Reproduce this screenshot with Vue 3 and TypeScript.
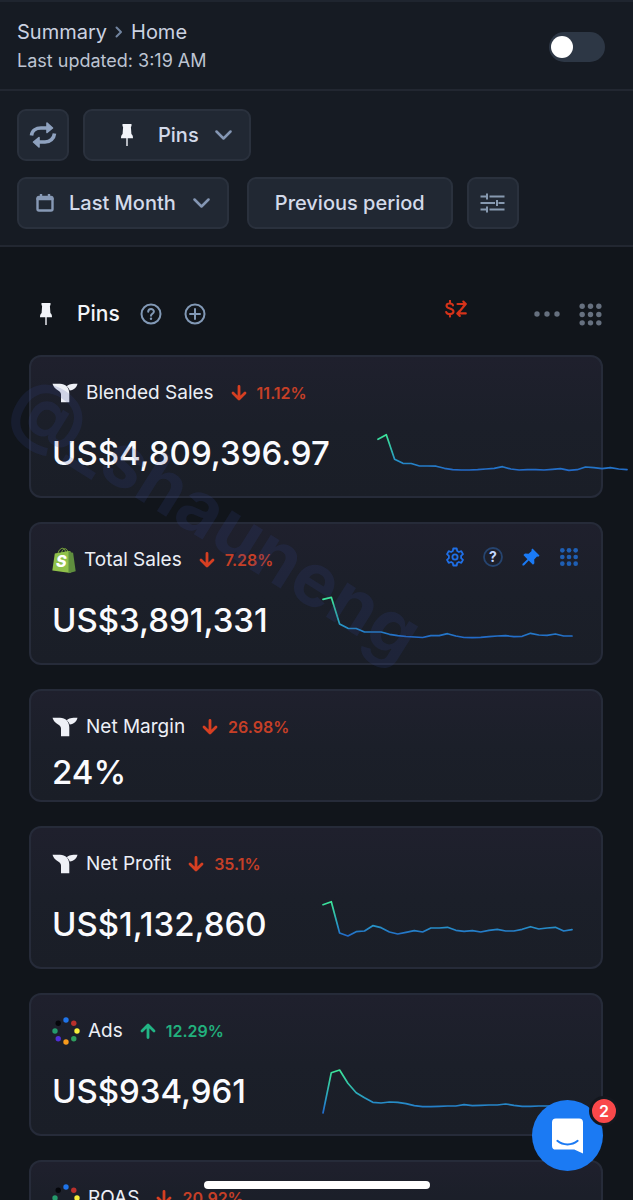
<script setup lang="ts">
import { ref } from 'vue'

type IconName = 'whale' | 'shop' | 'ring'

interface Metric {
  title: string
  icon: IconName
  change: string
  up?: boolean
  value?: string
  tools?: boolean
  series?: number[]
}

const CHART_WIDTH = 249

const metrics: Metric[] = [
  {
    title: 'Blended Sales',
    icon: 'whale',
    change: '11.12%',
    value: 'US$4,809,396.97',
    series: [21.3, 16.7, 41.3, 45.3, 45.5, 48, 48, 48.2, 50.3, 51.7, 52, 52, 51.7, 51, 50.3, 48.7, 51, 52, 51.7, 51.7, 52, 51.3, 50.7, 52.3, 51.7, 49, 49.7, 50.7, 49.7, 51, 51.7],
  },
  {
    title: 'Total Sales',
    icon: 'shop',
    change: '7.28%',
    value: 'US$3,891,331',
    tools: true,
    series: [14.3, 12.3, 39, 43.3, 43.5, 47, 47, 47, 49.3, 50.7, 51.5, 52, 52.5, 50.7, 50.7, 48.7, 51, 52.5, 52.7, 52.3, 51.7, 51, 50.7, 51.7, 51.3, 48.3, 50, 50.3, 49, 51, 51],
  },
  { title: 'Net Margin', icon: 'whale', change: '26.98%', value: '24%' },
  {
    title: 'Net Profit',
    icon: 'whale',
    change: '35.1%',
    value: 'US$1,132,860',
    series: [15.7, 12.7, 44, 47, 42.7, 42, 36.7, 38.7, 43, 45, 43.3, 41.7, 43, 39, 39, 38.3, 41.3, 42.3, 41.7, 43, 41.3, 40.3, 42, 42, 40.3, 37.7, 40, 39, 38.3, 42, 40.7],
  },
  {
    title: 'Ads',
    icon: 'ring',
    change: '12.29%',
    up: true,
    value: 'US$934,961',
    series: [57, 16.7, 14, 27.3, 36.7, 41.7, 46.3, 47, 46, 46.3, 47.7, 49.7, 50.7, 50.7, 50.3, 50, 50, 48.7, 49.7, 49.3, 49, 49, 48, 49.3, 50.3, 50.3, 50, 50, 50, 50, 50],
  },
  { title: 'ROAS', icon: 'ring', change: '20.92%' },
]

const ringDots = ['#1f74ea', '#b9302c', '#f7ee3a', '#2f9e5f', '#f79a1c', '#4f2fd6', '#259a6c', '#05060a'].map(
  (fill, i) => {
    const angle = (i * Math.PI) / 4
    return { fill, x: 14 + 11 * Math.sin(angle), y: 14 - 11 * Math.cos(angle) }
  },
)

const gridDots = [4, 12, 20].flatMap((y) => [4, 12, 20].map((x) => ({ x, y })))

const shiftMode = ref(false)

function points(series: number[]): string {
  const step = CHART_WIDTH / (series.length - 1)
  return series.map((y, i) => `${(i * step).toFixed(1)},${y}`).join(' ')
}
</script>

<template>
  <div class="page">
    <header class="top">
      <div>
        <nav class="crumbs" aria-label="Breadcrumb">
          <a href="#summary">Summary</a>
          <svg class="crumb-sep" viewBox="0 0 8 12" aria-hidden="true"><path d="M1.500 1.500 6 6l-4.500 4.500" /></svg>
          <a href="#home">Home</a>
        </nav>
        <p class="updated">Last updated: 3:19 AM</p>
      </div>
      <input v-model="shiftMode" class="switch" type="checkbox" role="switch" aria-label="Live mode" />
    </header>

    <div class="toolbar">
      <div class="row">
        <button class="btn square" type="button" aria-label="Refresh">
          <svg class="refresh" viewBox="0 0 28 28" aria-hidden="true">
            <path class="arc" d="M2.500 14.500C3 9.500 7 7 12 7h9M25.500 12.500c-.5 5-4.500 8.500-9.500 8.500H8" />
            <path class="head" d="m18 2 5.500 5-5.500 4.500zM10 16.500 4.500 21l5.500 5z" />
          </svg>
        </button>
        <button class="btn pins" type="button">
          <svg class="pin" viewBox="0 0 12 22" aria-hidden="true"><path d="M1.500 0h9v2l-.6 1 .5 7c1 .8 1.600 2 1.600 4.200H6.700V22H5.300v-7.800H0C0 12 .6 10.800 1.600 10l.5-7-.6-1z" /></svg>
          <span>Pins</span>
          <svg class="chev" viewBox="0 0 17 10" aria-hidden="true"><path d="m1.500 1.500 7 7 7-7" /></svg>
        </button>
      </div>
      <div class="row">
        <button class="btn month" type="button">
          <svg class="cal" viewBox="0 0 18 18" aria-hidden="true">
            <rect x="1.500" y="3" width="15" height="13.500" rx="1.500" />
            <path d="M1.500 5h15M5 .5V4M13 .5V4" />
          </svg>
          <span>Last Month</span>
          <svg class="chev" viewBox="0 0 17 10" aria-hidden="true"><path d="m1.500 1.500 7 7 7-7" /></svg>
        </button>
        <button class="btn period" type="button">Previous period</button>
        <button class="btn square" type="button" aria-label="Filters">
          <svg class="sliders" viewBox="0 0 25 20" aria-hidden="true">
            <path d="M.5 3.500H6M9.500 3.500h15M7 .5v6M.5 10H15M18.500 10h6M17 7v6M.5 16.500H6M9.500 16.500h15M7 13.500v6" />
          </svg>
        </button>
      </div>
    </div>

    <main class="content">
      <div class="section-head">
        <svg class="pin" viewBox="0 0 12 22" aria-hidden="true"><path d="M1.500 0h9v2l-.6 1 .5 7c1 .8 1.600 2 1.600 4.200H6.700V22H5.300v-7.800H0C0 12 .6 10.800 1.600 10l.5-7-.6-1z" /></svg>
        <h1>Pins</h1>
        <button class="bare help" type="button" aria-label="Help">
          <svg viewBox="0 0 22 22" aria-hidden="true">
            <circle cx="11" cy="11" r="9.500" />
            <path d="M8.200 8.800c0-3.700 5.700-3.600 5.700-.2 0 2.200-2.900 2.200-2.900 4.200" />
            <circle class="dot" cx="11" cy="15.700" r="1.200" />
          </svg>
        </button>
        <button class="bare add" type="button" aria-label="Add metric">
          <svg viewBox="0 0 22 22" aria-hidden="true">
            <circle cx="11" cy="11" r="9.500" />
            <path d="M11 6v10M6 11h10" />
          </svg>
        </button>
        <button class="bare currency" type="button" aria-label="Convert currency">
          <svg viewBox="0 0 22 18" aria-hidden="true">
            <path d="M8 5.400C7.500 2.800 1.500 2.700 1.500 5.700c0 3.300 7 2.300 7 5.900 0 3.300-6.600 3.200-7.300.4M5 .8v2M5 14.600v2" />
            <path d="M12.500 4H20M18.300 1.500 20.800 4 13 13.200M18.300 6.500 20.800 4M20.800 13.400h-8M14.800 10.800l-2.500 2.600 2.500 2.600" />
          </svg>
        </button>
        <button class="bare more" type="button" aria-label="More options">
          <svg viewBox="0 0 26 6" aria-hidden="true">
            <circle cx="3" cy="3" r="2.700" /><circle cx="13" cy="3" r="2.700" /><circle cx="23" cy="3" r="2.700" />
          </svg>
        </button>
        <button class="bare layout" type="button" aria-label="Change layout">
          <svg viewBox="0 0 24 24" aria-hidden="true">
            <circle v-for="(d, i) in gridDots" :key="i" :cx="d.x" :cy="d.y" r="2.600" />
          </svg>
        </button>
      </div>

      <section class="cards" aria-label="Pinned metrics">
        <article v-for="(m, index) in metrics" :key="m.title" class="card">
          <div class="card-head">
            <svg v-if="m.icon === 'whale'" class="whale" viewBox="0 0 26 20" aria-hidden="true">
              <path d="M.5.800H8c5.500 0 9.300 3.700 9.300 9.700v8.700H9V11.500c0-2.500-1.800-3.300-4-4.800C2.800 5.200 1.300 3.500.5.800z" />
              <path d="M25.500.800c-.8 3.700-3.200 6.200-7.800 6.700-.6-1.700-1.500-3.200-2.900-4.300C16.800 1.200 19.500.800 25.500.800z" />
            </svg>
            <svg v-else-if="m.icon === 'shop'" class="shop" viewBox="0 0 24 27" aria-hidden="true">
              <path class="handle" d="M6 6.500C6.500 2.500 10 .5 11.500 1.500 13 2.500 13.500 4 13.500 6M9.500 6c.5-3 2.500-5 4.500-4 1.400.7 1.800 2.500 1.800 4" />
              <path class="bag" d="M2.800 6.500 16.500 4l2 .2V26L.3 23.500z" />
              <path class="side" d="M16.500 4l3 1.500 1.600.3 2.600 18.500-7.200 2z" />
              <text x="4" y="20">S</text>
            </svg>
            <svg v-else class="ring" viewBox="0 0 28 28" aria-hidden="true">
              <circle v-for="(d, i) in ringDots" :key="i" :cx="d.x" :cy="d.y" r="2.700" :fill="d.fill" />
            </svg>
            <h2>{{ m.title }}</h2>
            <span class="change" :class="{ up: m.up }">
              <svg viewBox="0 0 16 16" aria-hidden="true"><path d="M8 1.500v12M2 8l6 6 6-6" /></svg>
              {{ m.change }}
            </span>
            <div v-if="m.tools" class="tools">
              <button class="bare tool" type="button" aria-label="Settings">
                <svg class="gear" viewBox="0 0 20 20" aria-hidden="true">
                  <path d="M8.300 1.500h3.400l.5 2.500 1.700 1 2.400-.8L18 7.100l-1.900 1.700v2.400l1.900 1.700-1.700 2.900-2.400-.8-1.700 1-.5 2.500H8.300L7.800 16l-1.700-1-2.400.8L2 12.900l1.900-1.700V8.800L2 7.100l1.700-2.900 2.400.8 1.700-1z" />
                  <circle cx="10" cy="10" r="2.600" />
                </svg>
              </button>
              <button class="bare tool" type="button" aria-label="About this metric">
                <svg class="about" viewBox="0 0 20 20" aria-hidden="true">
                  <circle cx="10" cy="10" r="9" />
                  <text x="10" y="15" text-anchor="middle">?</text>
                </svg>
              </button>
              <button class="bare tool" type="button" aria-label="Unpin">
                <svg class="tack" viewBox="0 0 20 20" aria-hidden="true">
                  <path d="M11.500 1.500 18.500 8.500l-1.200 1.300-1.300-.2-2.800 3 .2 3.600-1.400 1.600-4.300-4.300L3 18.500 1.500 18.600 1.400 17l5-4.800-4-4.200L4 6.600l3.600.2 3-2.800-.2-1.300z" />
                </svg>
              </button>
              <button class="bare tool" type="button" aria-label="Move card">
                <svg class="mini-grid" viewBox="0 0 24 24" aria-hidden="true">
                  <circle v-for="(d, i) in gridDots" :key="i" :cx="d.x" :cy="d.y" r="2.800" />
                </svg>
              </button>
            </div>
          </div>
          <div class="card-body">
            <strong v-if="m.value" class="value">{{ m.value }}</strong>
            <svg v-if="m.series" class="chart" :viewBox="`0 0 ${CHART_WIDTH} 70`" role="img" :aria-label="`${m.title} trend`">
              <defs>
                <linearGradient :id="`trend-${index}`" x1="0" y1="0" x2="0" y2="1">
                  <stop offset="0" stop-color="#3ce59a" />
                  <stop offset="0.350" stop-color="#33c3a8" />
                  <stop offset="0.700" stop-color="#2795c8" />
                  <stop offset="1" stop-color="#2269c8" />
                </linearGradient>
              </defs>
              <polyline :points="points(m.series)" :stroke="`url(#trend-${index})`" />
            </svg>
          </div>
        </article>
      </section>
    </main>

    <div class="watermark" aria-hidden="true">@_shauneng</div>

    <button class="chat" type="button" aria-label="Open chat, 2 unread">
      <svg viewBox="0 0 32 36" aria-hidden="true">
        <path class="bubble" d="M4 0h24a4 4 0 0 1 4 4v32c-3-1.200-6-2.300-9-4H4a4 4 0 0 1-4-4V4a4 4 0 0 1 4-4z" />
        <path class="smile" d="M5.500 23c6 5 15 5 21 0" />
      </svg>
      <span class="badge">2</span>
    </button>
    <div class="home-bar"></div>
  </div>
</template>

<style>
body {
  margin: 0;
  background: #11151b;
}
</style>

<style scoped>
.page {
  position: relative;
  box-sizing: border-box;
  height: 100vh;
  display: flex;
  flex-direction: column;
  overflow: hidden;
  background: #11151b;
  color: #d3d9e6;
  font-family: Inter, "Liberation Sans", sans-serif;
}

svg {
  display: block;
  flex: none;
  fill: none;
  stroke-linecap: round;
  stroke-linejoin: round;
}

button {
  font: inherit;
  color: inherit;
  cursor: pointer;
}

h1,
h2,
p {
  margin: 0;
}

.top {
  flex: none;
  display: flex;
  align-items: center;
  justify-content: space-between;
  padding: 18px 28px 16px 17px;
  border-top: 2px solid #1f252f;
  border-bottom: 2px solid #222731;
  background: #161b23;
}

.crumbs {
  display: flex;
  align-items: center;
  gap: 8px;
  font-size: 20px;
  line-height: 24px;
}

.crumbs a {
  color: #cbd2e1;
  text-decoration: none;
}

.crumb-sep {
  width: 8px;
  height: 12px;
  stroke: #71849f;
  stroke-width: 2;
}

.updated {
  margin-top: 5px;
  font-size: 18px;
  line-height: 24px;
  color: #bdc4d2;
}

.switch {
  appearance: none;
  flex: none;
  display: flex;
  align-items: center;
  width: 56px;
  height: 30px;
  margin: 0;
  padding: 0 2px;
  border-radius: 15px;
  background: #2d3745;
  cursor: pointer;
}

.switch::before {
  content: "";
  width: 22px;
  height: 22px;
  border-radius: 50%;
  background: #fff;
}

.switch:checked {
  justify-content: flex-end;
}

.toolbar {
  flex: none;
  display: flex;
  flex-direction: column;
  gap: 16px;
  padding: 18px 17px 16px;
  border-bottom: 2px solid #222731;
  background: #161b23;
}

.row {
  display: flex;
  flex-wrap: wrap;
  gap: 14px;
}

.btn {
  box-sizing: border-box;
  display: flex;
  align-items: center;
  height: 52px;
  padding: 0 18px;
  border: 2px solid #2a313d;
  border-radius: 9px;
  background: #212833;
  color: #d3daea;
  font-size: 20px;
  line-height: 24px;
  font-weight: 500;
}

.square {
  width: 52px;
  padding: 0;
  justify-content: center;
}

.pins {
  padding: 0 17px 0 36px;
}

.pins span {
  margin: 0 16px 0 25px;
}

.month {
  padding: 0 17px;
  margin-right: 4px;
}

.month span {
  margin: 0 17px 0 15px;
}

.period {
  padding: 0 26px;
}

.refresh {
  width: 28px;
  height: 28px;
}

.refresh .arc {
  stroke: #8fa2bf;
  stroke-width: 3.6;
  stroke-linecap: butt;
}

.refresh .head {
  fill: #8fa2bf;
  stroke: #8fa2bf;
  stroke-width: 1.6;
}

.pin {
  width: 12px;
  height: 22px;
  fill: #f2f4f9;
}

.chev {
  width: 17px;
  height: 10px;
  stroke: #8496b3;
  stroke-width: 2.5;
}

.cal {
  width: 18px;
  height: 18px;
  stroke: #8799b5;
  stroke-width: 2.4;
}

.sliders {
  width: 25px;
  height: 20px;
  stroke: #8799b0;
  stroke-width: 2;
  stroke-linecap: butt;
}

.content {
  flex: 1;
  min-height: 0;
  overflow: hidden auto;
  scrollbar-width: none;
  padding-bottom: 24px;
}

.section-head {
  display: flex;
  align-items: center;
  height: 28px;
  padding: 0 30px 0 40px;
  margin: 53px 0 27px;
}

h1 {
  margin-left: 25px;
  font-size: 21px;
  line-height: 28px;
  font-weight: 500;
  color: #f3f5fa;
}

.bare {
  flex: none;
  padding: 0;
  border: 0;
  background: none;
}

.help {
  margin-left: 20px;
}

.add {
  margin-left: 22px;
}

.help svg,
.add svg {
  width: 22px;
  height: 22px;
  stroke: #8299b6;
  stroke-width: 2;
}

.help .dot {
  fill: #8299b6;
  stroke: none;
}

.currency {
  align-self: flex-start;
  margin-left: auto;
}

.currency svg {
  width: 22px;
  height: 18px;
  stroke: #d6331a;
  stroke-width: 2.1;
}

.more {
  margin-left: 67px;
}

.more svg {
  width: 26px;
  height: 6px;
  fill: #66707f;
}

.layout {
  margin-left: 18px;
}

.layout svg {
  width: 25px;
  height: 25px;
  fill: #66707f;
}

.cards {
  display: flex;
  flex-direction: column;
  gap: 24px;
  padding: 0 30px 0 29px;
}

.card {
  padding: 22px 29px 8px 21px;
  border: 2px solid #262b39;
  border-radius: 12px;
  background: linear-gradient(#1f202d, #1b1f29 50%, #1a1e27);
}

.card-head {
  display: flex;
  align-items: center;
  height: 28px;
}

.whale {
  width: 26px;
  height: 20px;
  fill: #eef0f6;
}

.shop {
  width: 24px;
  height: 27px;
}

.shop .handle {
  stroke: #7fae3e;
  stroke-width: 1;
}

.shop .bag {
  fill: #8fc04a;
}

.shop .side {
  fill: #5f8e3e;
}

.shop text {
  fill: #fff;
  font-size: 16px;
  font-weight: 800;
  font-style: italic;
}

.ring {
  width: 28px;
  height: 28px;
}

h2 {
  margin-left: 8px;
  font-size: 19px;
  line-height: 28px;
  font-weight: 400;
  color: #eceff6;
}

.change {
  display: flex;
  align-items: center;
  gap: 10px;
  margin-left: 17px;
  font-size: 16px;
  line-height: 28px;
  font-weight: 600;
  color: #c63f27;
}

.change svg {
  width: 16px;
  height: 16px;
  stroke: #d63f22;
  stroke-width: 2.8;
}

.change.up {
  color: #22b07d;
}

.change.up svg {
  stroke: #22b585;
  transform: rotate(180deg);
}

.tools {
  display: flex;
  gap: 18px;
  margin-left: auto;
  margin-right: -7px;
  padding-bottom: 6px;
}

.tool svg {
  width: 20px;
  height: 20px;
}

.gear {
  stroke: #1f6fe6;
  stroke-width: 1.8;
}

.about circle {
  stroke: #26446f;
  stroke-width: 1.8;
}

.about text {
  fill: #c3d8ff;
  font-size: 14px;
  font-weight: 700;
}

.tack {
  fill: #1a7af5;
}

.mini-grid {
  fill: #1f5fb4;
}

.card-body {
  display: flex;
  align-items: center;
  justify-content: space-between;
  gap: 48px;
  margin-top: 11px;
}

.value {
  flex: none;
  font-size: 33px;
  line-height: 40px;
  font-weight: 500;
  color: #fafbfe;
}

.chart {
  width: 249px;
  height: 70px;
  overflow: visible;
}

.chart polyline {
  stroke-width: 1.7;
}

.watermark {
  position: absolute;
  left: 19px;
  top: 353px;
  font-size: 74px;
  line-height: 80px;
  font-weight: 700;
  color: rgba(52, 72, 150, 0.17);
  transform: rotate(32deg);
  transform-origin: 0 50%;
  pointer-events: none;
}

.chat {
  position: absolute;
  right: 30px;
  bottom: 29px;
  display: flex;
  align-items: center;
  justify-content: center;
  width: 71px;
  height: 71px;
  padding: 0;
  border: 0;
  border-radius: 50%;
  background: #1b7af3;
}

.chat svg {
  width: 31px;
  height: 36px;
}

.bubble {
  fill: #fff;
}

.smile {
  stroke: #1b7af3;
  stroke-width: 2;
}

.badge {
  position: absolute;
  top: -4px;
  right: -16px;
  width: 24px;
  height: 24px;
  border: 3px solid #14171e;
  border-radius: 50%;
  background: #f9484a;
  color: #fff;
  font-size: 16px;
  line-height: 24px;
  font-weight: 600;
}

.home-bar {
  position: absolute;
  left: 50%;
  bottom: 11px;
  width: 226px;
  height: 8px;
  border-radius: 4px;
  background: #fff;
  transform: translateX(-50%);
}
</style>
